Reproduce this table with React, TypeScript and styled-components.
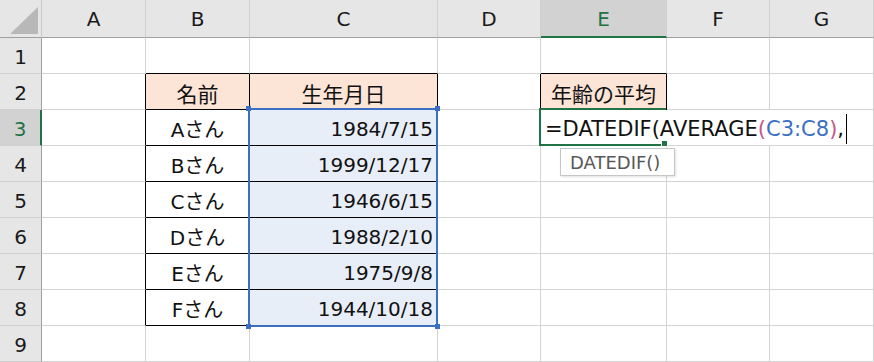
import React from "react";
import styled, { createGlobalStyle } from "styled-components";

const GlobalStyle = createGlobalStyle`
  html, body {
    margin: 0;
    padding: 0;
    background: #ffffff;
  }
  body {
    font-family: "DejaVu Sans", "Noto Sans CJK JP", sans-serif;
    color: #111;
  }
`;

const GRID = "#d4d4d4";
const INK = "#000000";
const GREEN = "#217346";
const BLUE = "#3b6fc4";
const PEACH = "#fce4d6";
const PICK = "#e8eef8";

const COLS = ["A", "B", "C", "D", "E", "F", "G"];
const WIDTHS = [104, 104, 188, 103, 126, 103, 104];
const ROWS = [1, 2, 3, 4, 5, 6, 7, 8, 9];

const ACTIVE_COL = 4;
const ACTIVE_ROW = 3;

const Sheet = styled.div`
  width: 874px;
  height: 362px;
  overflow: hidden;
  display: grid;
  grid-template-columns: 42px ${WIDTHS.map((w) => `${w}px`).join(" ")};
  grid-template-rows: 38px repeat(9, 36px);
`;

const Corner = styled.div`
  box-sizing: border-box;
  background: #e6e6e6;
  border-right: 1px solid #c8c8c8;
  border-bottom: 1px solid #9f9f9f;
  display: flex;
  align-items: flex-end;
  justify-content: flex-end;
  padding: 0 3px 3px 0;
  &::after {
    content: "";
    width: 28px;
    height: 27px;
    background: #b8b8b8;
    clip-path: polygon(100% 0, 100% 100%, 0 100%);
  }
`;

const ColHead = styled.div<{ $active?: boolean }>`
  box-sizing: border-box;
  display: flex;
  align-items: center;
  justify-content: center;
  background: ${(p) => (p.$active ? "#d2d2d2" : "#e6e6e6")};
  color: ${(p) => (p.$active ? GREEN : "#1a1a1a")};
  border-right: 1px solid #d0d0d0;
  border-bottom: ${(p) => (p.$active ? `2px solid ${GREEN}` : "1px solid #9f9f9f")};
  font-size: 20px;
  padding-top: ${(p) => (p.$active ? "1px" : "0")};
`;

const RowHead = styled.div<{ $active?: boolean; $row: number }>`
  grid-column: 1;
  grid-row: ${(p) => p.$row + 1};
  box-sizing: border-box;
  display: flex;
  align-items: center;
  justify-content: center;
  background: ${(p) => (p.$active ? "#d2d2d2" : "#e6e6e6")};
  color: ${(p) => (p.$active ? GREEN : "#1a1a1a")};
  border-right: ${(p) => (p.$active ? `2px solid ${GREEN}` : "1px solid #9f9f9f")};
  border-bottom: 1px solid #d0d0d0;
  font-size: 20px;
  padding-top: 2px;
`;

const Cell = styled.div<{
  $row: number;
  $col: number;
  $fill?: string;
  $align?: "left" | "center" | "right";
  $right: string;
  $bottom: string;
}>`
  grid-column: ${(p) => p.$col + 2};
  grid-row: ${(p) => p.$row + 1};
  box-sizing: border-box;
  display: flex;
  align-items: center;
  justify-content: ${(p) =>
    p.$align === "right" ? "flex-end" : p.$align === "center" ? "center" : "flex-start"};
  padding: 2px 4px 0 4px;
  background: ${(p) => p.$fill ?? "#ffffff"};
  border-right: 1px solid ${(p) => p.$right};
  border-bottom: 1px solid ${(p) => p.$bottom};
  font-size: 20px;
  color: #111;
  white-space: nowrap;
`;

const Label = styled.span`
  font-family: "Noto Sans CJK JP", sans-serif;
  font-size: 21px;
`;

const Name = styled.span`
  font-family: "DejaVu Sans", "Noto Sans CJK JP", sans-serif;
  font-size: 20px;
`;

/* blue highlight around the range C3:C8, laid on the same grid tracks */
const RangeBox = styled.div`
  grid-column: 4;
  grid-row: 4 / 10;
  position: relative;
  z-index: 2;
  margin: -2px 0 -1px -2px;
  box-sizing: border-box;
  border: 2px solid ${BLUE};
  pointer-events: none;
`;

const Handle = styled.span<{ $v: "top" | "bottom"; $h: "left" | "right" }>`
  position: absolute;
  ${(p) => p.$v}: -4px;
  ${(p) => p.$h}: -4px;
  width: 5px;
  height: 5px;
  background: ${BLUE};
`;

/* in-cell editor for E3, overflowing into F3:G3 */
const Editor = styled.div`
  grid-column: 6 / 9;
  grid-row: 4;
  justify-self: start;
  width: 312px;
  margin-bottom: 1px;
  position: relative;
  z-index: 2;
  background: #ffffff;
  display: flex;
  align-items: center;
  padding: 2px 0 0 4px;
  box-sizing: border-box;
  font-family: "DejaVu Sans", sans-serif;
  font-size: 21px;
  color: #111;
  white-space: nowrap;
`;

const ActiveFrame = styled.div`
  grid-column: 6;
  grid-row: 4;
  position: relative;
  z-index: 3;
  margin: -2px 1px 0 -2px;
  box-sizing: border-box;
  border: 2px solid ${GREEN};
  border-right: none;
  pointer-events: none;
`;

const FillHandle = styled.span`
  position: absolute;
  right: -1px;
  bottom: -2px;
  width: 5px;
  height: 5px;
  background: ${GREEN};
  outline: 1px solid #ffffff;
`;

const Paren = styled.span`
  color: #c5578a;
`;

const Ref = styled.span`
  color: ${BLUE};
`;

const Caret = styled.span`
  display: inline-block;
  width: 1px;
  height: 30px;
  margin-left: 2px;
  background: #000;
`;

const Tip = styled.div`
  grid-column: 6 / 8;
  grid-row: 5;
  justify-self: start;
  align-self: start;
  margin: 2px 0 0 19px;
  position: relative;
  z-index: 4;
  width: 115px;
  height: 28px;
  box-sizing: border-box;
  background: #ffffff;
  border: 1px solid #c6c6c6;
  box-shadow: 1px 1px 2px rgba(0, 0, 0, 0.12);
  display: flex;
  align-items: center;
  padding: 1px 0 0 9px;
  font-family: "DejaVu Sans", sans-serif;
  font-size: 18px;
  color: #595959;
`;

type Entry = {
  text: string;
  align: "left" | "center" | "right";
  fill?: string;
  kind: "label" | "name" | "value";
};

const people = [
  { name: "Aさん", born: "1984/7/15" },
  { name: "Bさん", born: "1999/12/17" },
  { name: "Cさん", born: "1946/6/15" },
  { name: "Dさん", born: "1988/2/10" },
  { name: "Eさん", born: "1975/9/8" },
  { name: "Fさん", born: "1944/10/18" },
];

const content: Record<string, Entry> = {
  "2-1": { text: "名前", align: "center", fill: PEACH, kind: "label" },
  "2-2": { text: "生年月日", align: "center", fill: PEACH, kind: "label" },
  "2-4": { text: "年齢の平均", align: "center", fill: PEACH, kind: "label" },
};
people.forEach((p, i) => {
  content[`${i + 3}-1`] = { text: p.name, align: "center", kind: "name" };
  content[`${i + 3}-2`] = { text: p.born, align: "right", fill: PICK, kind: "value" };
});

const inTable = (r: number, c: number) =>
  (r >= 2 && r <= 8 && (c === 1 || c === 2)) || (r === 2 && c === 4);

function renderEntry(e?: Entry) {
  if (!e) return null;
  if (e.kind === "label") return <Label>{e.text}</Label>;
  if (e.kind === "name") return <Name>{e.text}</Name>;
  return <span>{e.text}</span>;
}

export default function App() {
  return (
    <>
      <GlobalStyle />
      <Sheet>
        <Corner />
        {COLS.map((c, i) => (
          <ColHead key={c} $active={i === ACTIVE_COL}>
            {c}
          </ColHead>
        ))}
        {ROWS.map((r) => (
          <React.Fragment key={r}>
            <RowHead $row={r} $active={r === ACTIVE_ROW}>
              {r}
            </RowHead>
            {COLS.map((_, c) => {
              const e = content[`${r}-${c}`];
              const right = inTable(r, c) || inTable(r, c + 1) ? INK : GRID;
              const bottom = inTable(r, c) || inTable(r + 1, c) ? INK : GRID;
              return (
                <Cell
                  key={c}
                  $row={r}
                  $col={c}
                  $fill={e?.fill}
                  $align={e?.align}
                  $right={right}
                  $bottom={bottom}
                >
                  {renderEntry(e)}
                </Cell>
              );
            })}
          </React.Fragment>
        ))}

        <RangeBox>
          <Handle $v="top" $h="left" />
          <Handle $v="top" $h="right" />
          <Handle $v="bottom" $h="left" />
          <Handle $v="bottom" $h="right" />
        </RangeBox>

        <Editor>
          <span>=DATEDIF(AVERAGE</span>
          <Paren>(</Paren>
          <Ref>C3:C8</Ref>
          <Paren>)</Paren>
          <span>,</span>
          <Caret />
        </Editor>
        <ActiveFrame>
          <FillHandle />
        </ActiveFrame>
        <Tip>DATEDIF()</Tip>
      </Sheet>
    </>
  );
}
